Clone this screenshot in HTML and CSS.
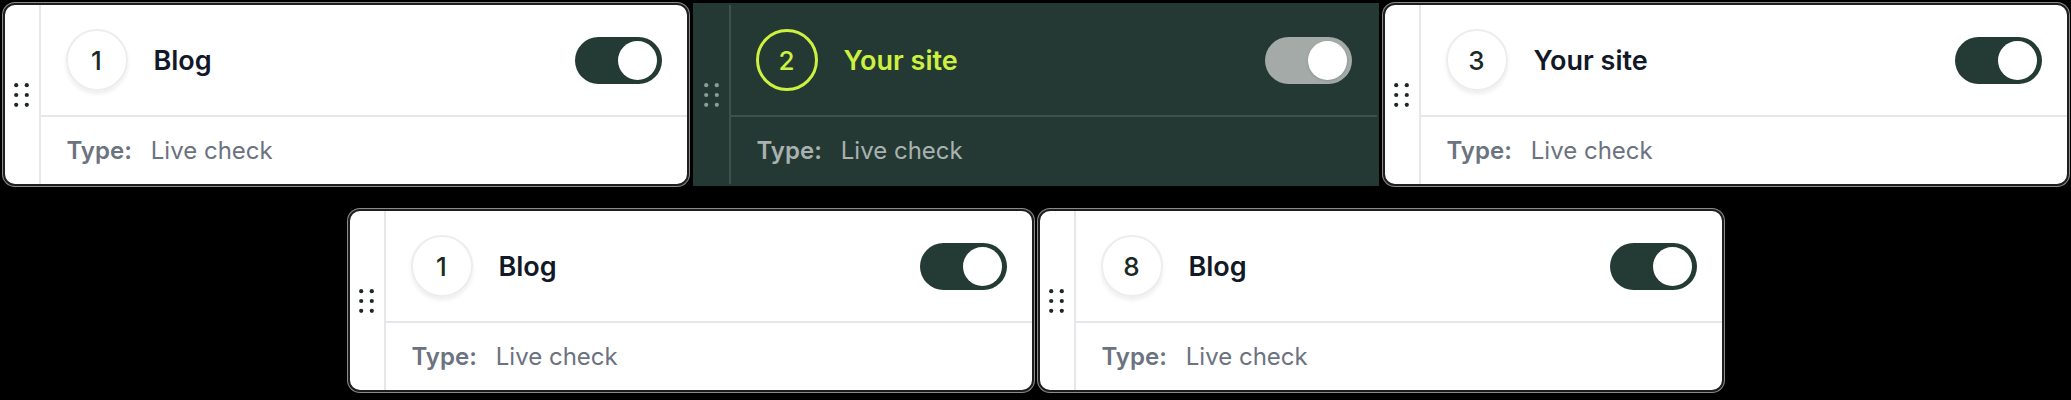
FILE: index.html
```html
<!DOCTYPE html>
<html>
<head>
<meta charset="utf-8">
<link rel="stylesheet" href="styles.css">
</head>
<body>
<div class="board">
  <div class="row">
    <div class="card">
      <div class="handle"><svg class="dots" viewBox="0 0 15 24" width="15" height="24"><circle cx="2.2" cy="2.2" r="2.1"/><circle cx="12.8" cy="2.2" r="2.1"/><circle cx="2.2" cy="12" r="2.1"/><circle cx="12.8" cy="12" r="2.1"/><circle cx="2.2" cy="21.8" r="2.1"/><circle cx="12.8" cy="21.8" r="2.1"/></svg></div>
      <div class="body">
        <div class="head">
          <div class="num">1</div>
          <div class="title">Blog</div>
          <div class="toggle"><span class="knob"></span></div>
        </div>
        <div class="foot"><span class="label">Type:</span><span class="value">Live check</span></div>
      </div>
    </div>
    <div class="card dark">
      <div class="handle"><svg class="dots" viewBox="0 0 15 24" width="15" height="24"><circle cx="2.2" cy="2.2" r="2.1"/><circle cx="12.8" cy="2.2" r="2.1"/><circle cx="2.2" cy="12" r="2.1"/><circle cx="12.8" cy="12" r="2.1"/><circle cx="2.2" cy="21.8" r="2.1"/><circle cx="12.8" cy="21.8" r="2.1"/></svg></div>
      <div class="body">
        <div class="head">
          <div class="num">2</div>
          <div class="title">Your site</div>
          <div class="toggle"><span class="knob"></span></div>
        </div>
        <div class="foot"><span class="label">Type:</span><span class="value">Live check</span></div>
      </div>
    </div>
    <div class="card">
      <div class="handle"><svg class="dots" viewBox="0 0 15 24" width="15" height="24"><circle cx="2.2" cy="2.2" r="2.1"/><circle cx="12.8" cy="2.2" r="2.1"/><circle cx="2.2" cy="12" r="2.1"/><circle cx="12.8" cy="12" r="2.1"/><circle cx="2.2" cy="21.8" r="2.1"/><circle cx="12.8" cy="21.8" r="2.1"/></svg></div>
      <div class="body">
        <div class="head">
          <div class="num">3</div>
          <div class="title">Your site</div>
          <div class="toggle"><span class="knob"></span></div>
        </div>
        <div class="foot"><span class="label">Type:</span><span class="value">Live check</span></div>
      </div>
    </div>
  </div>
  <div class="row">
    <div class="card">
      <div class="handle"><svg class="dots" viewBox="0 0 15 24" width="15" height="24"><circle cx="2.2" cy="2.2" r="2.1"/><circle cx="12.8" cy="2.2" r="2.1"/><circle cx="2.2" cy="12" r="2.1"/><circle cx="12.8" cy="12" r="2.1"/><circle cx="2.2" cy="21.8" r="2.1"/><circle cx="12.8" cy="21.8" r="2.1"/></svg></div>
      <div class="body">
        <div class="head">
          <div class="num">1</div>
          <div class="title">Blog</div>
          <div class="toggle"><span class="knob"></span></div>
        </div>
        <div class="foot"><span class="label">Type:</span><span class="value">Live check</span></div>
      </div>
    </div>
    <div class="card">
      <div class="handle"><svg class="dots" viewBox="0 0 15 24" width="15" height="24"><circle cx="2.2" cy="2.2" r="2.1"/><circle cx="12.8" cy="2.2" r="2.1"/><circle cx="2.2" cy="12" r="2.1"/><circle cx="12.8" cy="12" r="2.1"/><circle cx="2.2" cy="21.8" r="2.1"/><circle cx="12.8" cy="21.8" r="2.1"/></svg></div>
      <div class="body">
        <div class="head">
          <div class="num">8</div>
          <div class="title">Blog</div>
          <div class="toggle"><span class="knob"></span></div>
        </div>
        <div class="foot"><span class="label">Type:</span><span class="value">Live check</span></div>
      </div>
    </div>
  </div>
</div>
</body>
</html>
```
FILE: styles.css
```css
html, body {
  margin: 0;
  padding: 0;
  background: #000;
}
body {
  font-family: Inter, "Noto Sans", sans-serif;
  width: 2071px;
  height: 400px;
  overflow: hidden;
}
.board {
  padding-top: 3px;
  display: flex;
  flex-direction: column;
  gap: 23px;
}
.row {
  display: flex;
  justify-content: center;
  gap: 4px;
}
.card {
  width: 686px;
  height: 183px;
  box-sizing: border-box;
  background: #fff;
  border: 2px solid #1d1f1f;
  border-radius: 12px;
  box-shadow: 0 0 0 1px #8a8a8a;
  display: flex;
  overflow: hidden;
}
.handle {
  width: 34px;
  flex: none;
  border-right: 2px solid #e6e7ea;
  display: flex;
  align-items: center;
  justify-content: center;
}
.dots {
  display: block;
  fill: #1e2725;
}
.body {
  flex: 1;
  display: flex;
  flex-direction: column;
}
.head {
  height: 110px;
  flex: none;
  border-bottom: 2px solid #e6e7ea;
  display: flex;
  align-items: center;
  padding: 0 25px;
}
.num {
  width: 62px;
  height: 62px;
  box-sizing: border-box;
  border-radius: 50%;
  border: 2px solid #ededed;
  box-shadow: 0 3px 4px rgba(0, 0, 0, 0.07);
  display: flex;
  align-items: center;
  justify-content: center;
  font-size: 26px;
  font-weight: 500;
  color: #1a2925;
  flex: none;
}
.title {
  margin-left: 26px;
  font-size: 27px;
  font-weight: 600;
  color: #111827;
  flex: 1;
}
.toggle {
  width: 87px;
  height: 47px;
  box-sizing: border-box;
  border-radius: 24px;
  background: #243b35;
  padding: 4px 5px;
  display: flex;
  justify-content: flex-end;
  flex: none;
}
.knob {
  width: 39px;
  height: 39px;
  border-radius: 50%;
  background: #fff;
}
.foot {
  flex: 1;
  display: flex;
  align-items: center;
  gap: 19px;
  padding: 0 26px;
  font-size: 24px;
  color: #6b7280;
}
.label {
  font-weight: 600;
}
.value {
  font-weight: 400;
}

/* dragged / active card */
.card.dark {
  background: #253934;
  border-color: #253934;
  border-radius: 0;
  box-shadow: none;
}
.dark .handle {
  border-right-color: #3c524d;
}
.dark .dots {
  fill: #8e9c98;
}
.dark .head {
  border-bottom-color: #3c524d;
}
.dark .num {
  border: 3px solid #cdf140;
  box-shadow: none;
  color: #cdf140;
}
.dark .title {
  color: #cdf140;
}
.dark .toggle {
  background: #a4aaa8;
}
.dark .knob {
  box-shadow: 0 1px 3px rgba(0, 0, 0, 0.15);
}
.dark .foot {
  color: #a8b2af;
}
```
